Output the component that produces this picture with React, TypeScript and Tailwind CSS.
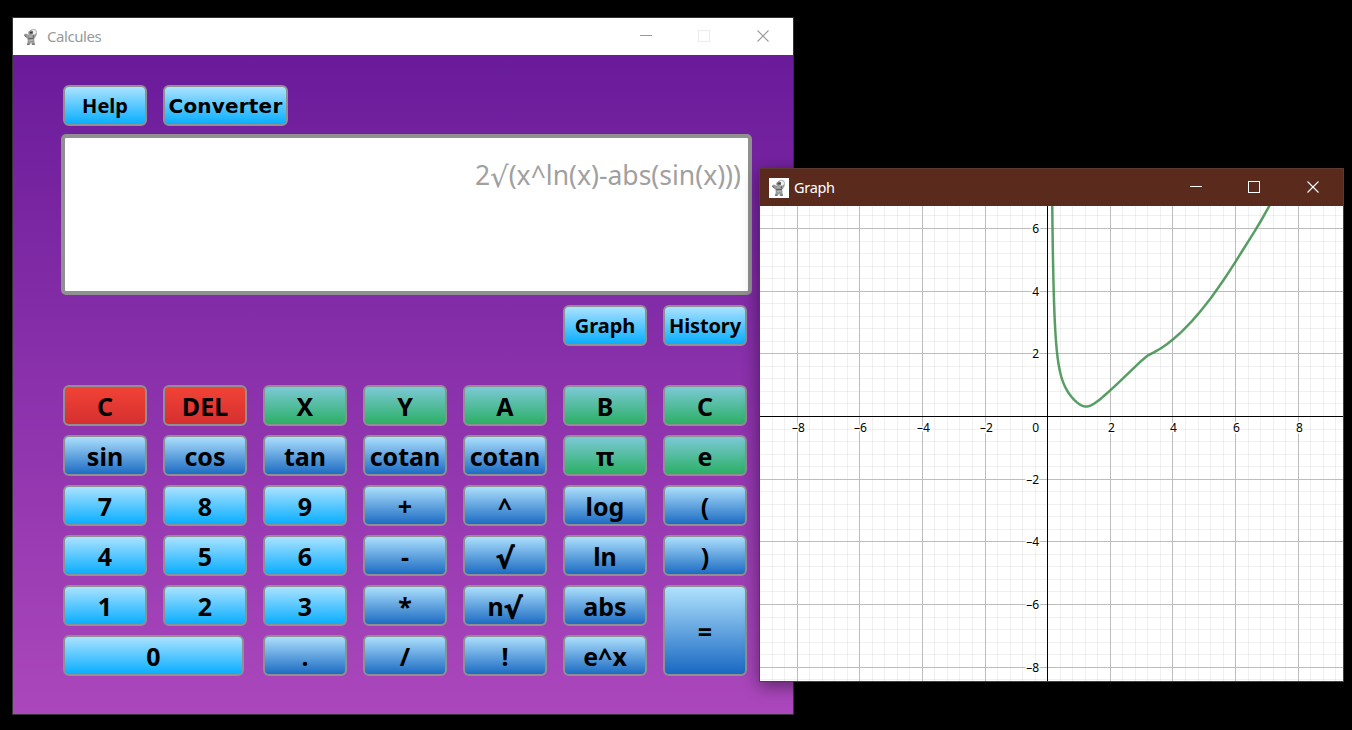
import type { ReactNode } from 'react';

type Tone = 'sky' | 'blue' | 'green' | 'red';

const TONES: Record<Tone, string> = {
  sky: 'from-[#b3e5ff] to-[#00abff]',
  blue: 'from-[#b3e5ff] to-[#1565c0]',
  green: 'from-[#80cbdc] to-[#27ae60]',
  red: 'from-[#f44336] to-[#d32f2f]',
};

const KEYS: { label: string; tone: Tone; span?: string }[] = [
  { label: 'C', tone: 'red' },
  { label: 'DEL', tone: 'red' },
  { label: 'X', tone: 'green' },
  { label: 'Y', tone: 'green' },
  { label: 'A', tone: 'green' },
  { label: 'B', tone: 'green' },
  { label: 'C', tone: 'green' },
  { label: 'sin', tone: 'blue' },
  { label: 'cos', tone: 'blue' },
  { label: 'tan', tone: 'blue' },
  { label: 'cotan', tone: 'blue' },
  { label: 'cotan', tone: 'blue' },
  { label: 'π', tone: 'green' },
  { label: 'e', tone: 'green' },
  { label: '7', tone: 'sky' },
  { label: '8', tone: 'sky' },
  { label: '9', tone: 'sky' },
  { label: '+', tone: 'blue' },
  { label: '^', tone: 'blue' },
  { label: 'log', tone: 'blue' },
  { label: '(', tone: 'blue' },
  { label: '4', tone: 'sky' },
  { label: '5', tone: 'sky' },
  { label: '6', tone: 'sky' },
  { label: '-', tone: 'blue' },
  { label: '√', tone: 'blue' },
  { label: 'ln', tone: 'blue' },
  { label: ')', tone: 'blue' },
  { label: '1', tone: 'sky' },
  { label: '2', tone: 'sky' },
  { label: '3', tone: 'sky' },
  { label: '*', tone: 'blue' },
  { label: 'n√', tone: 'blue' },
  { label: 'abs', tone: 'blue' },
  { label: '=', tone: 'blue', span: 'row-span-2' },
  { label: '0', tone: 'sky', span: 'col-span-2 mr-[3px]' },
  { label: '.', tone: 'blue' },
  { label: '/', tone: 'blue' },
  { label: '!', tone: 'blue' },
  { label: 'e^x', tone: 'blue' },
];

function Key({ tone, className, children }: { tone: Tone; className: string; children: ReactNode }) {
  return (
    <button
      className={`flex items-center justify-center rounded-[6px] border-2 border-[#909090] bg-linear-to-b/srgb bg-origin-border font-bold whitespace-nowrap text-black ${TONES[tone]} ${className}`}
    >
      {children}
    </button>
  );
}

/* The radical sign is set in its own face, larger than the surrounding letters. */
function Formula({ text, radical }: { text: string; radical: string }) {
  return (
    <span>
      {text.split('√').map((part, i) => (
        <span key={i}>
          {i > 0 && <span className={`font-['DejaVu_Sans',sans-serif] leading-none ${radical}`}>√</span>}
          {part}
        </span>
      ))}
    </span>
  );
}

function Astronaut() {
  return (
    <svg width="20" height="20" viewBox="0 0 20 20" className="shrink-0 bg-white">
      <circle cx="12.200" cy="5.700" r="3.300" fill="#f1f1f1" stroke="#c0c0c0" strokeWidth="1.200" />
      <path d="M3 7.600 5 6.600 7 7.600h6.500l1.400-1.200.6 1.200-1.300 3-1 1.200.2 2.600.8 3.400h-3.400l-.6-2.600-1.300 2.600H5.800l1-3.800-.4-2.600L4 9.800z" fill="#999999" />
      <path d="M7.400 4.800 9.800 3.300l2.400.9-.2 2.700-2.800.9-1.800-1z" fill="#858585" />
      <path d="M9 4.900l2.600-.2-.3 1.500-2 .3z" fill="#3a3a3a" />
      <path d="M3.300 8.200l2 1.600M6.800 11.800l6-.4M6.200 17.300h2.300M11.300 17.300h2.200M12.500 8.500v2" stroke="#5e5e5e" strokeWidth="1" />
      <path d="M8.300 9.200h2.600M8 13.400l3.800-.3" stroke="#c4c4c4" strokeWidth=".8" />
    </svg>
  );
}

function WindowControls({ color, boxColor }: { color: string; boxColor: string }) {
  return (
    <svg width="130" height="13" viewBox="0 0 130 13" fill="none" shapeRendering="crispEdges" className="shrink-0">
      <path d="M0 5.500h12" stroke={color} />
      <rect x="58.500" y=".5" width="11" height="11" stroke={boxColor} />
      <path d="M117.500.5l11 11M128.500.5l-11 11" stroke={color} shapeRendering="auto" strokeWidth="1.100" />
    </svg>
  );
}

const UNIT = 31.33;
const W = 583;
const H = 475;
const AX = 287;
const AY = 210;

const lineX = (v: number) => Math.round(AX + 0.17 + v * 31.325);
const lineY = (v: number) => Math.round(AY - v * UNIT);

function curve() {
  let d = '';
  for (let x = 0.12; x < 7.6; x += x < 1.8 ? 0.01 : 0.2) {
    const y = Math.sqrt(Math.pow(x, Math.log(x)) - Math.abs(Math.sin(x)));
    d += `${d ? 'L' : 'M'}${(AX + 0.8 + x * UNIT).toFixed(2)} ${(AY + 0.5 - y * UNIT).toFixed(2)}`;
  }
  return d;
}

function Plot() {
  const steps = Array.from({ length: 51 }, (_, i) => i - 25);
  const labels = [-8, -6, -4, -2, 2, 4, 6, 8];
  const text = (v: number) => (v < 0 ? `–${-v}` : `${v}`);
  return (
    <svg width={W} height={H} viewBox={`0 0 ${W} ${H}`} className="block bg-white">
      {steps.filter((k) => k % 5).map((k) => (
        <g key={k} fill="#000" fillOpacity=".06">
          <rect x={lineX(k * 0.4)} y="0" width="1" height={H} />
          <rect x="0" y={lineY(k * 0.4)} width={W} height="1" />
        </g>
      ))}
      {steps.filter((k) => k % 5 === 0).map((k) => (
        <g key={k} fill="#bdbdbd">
          <rect x={lineX(k * 0.4)} y="0" width="1" height={H} />
          <rect x="0" y={lineY(k * 0.4)} width={W} height="1" />
        </g>
      ))}
      <path d={`M${AX + 0.5} 0V${H}M0 ${AY + 0.5}H${W}`} stroke="#000" />
      <g fontSize="12" fontFamily="'Noto Sans', sans-serif" stroke="#fff" strokeWidth="3" strokeLinejoin="round" paintOrder="stroke">
        {labels.map((v) => (
          <text key={`x${v}`} x={lineX(v) + 1.5} y={AY + 16} textAnchor="middle">{text(v)}</text>
        ))}
        {labels.filter((v) => v !== 8).map((v) => (
          <text key={`y${v}`} x={AX - 8} y={lineY(v) + 5} textAnchor="end">{text(v)}</text>
        ))}
        <text x={AX - 8} y={AY + 16} textAnchor="end">0</text>
      </g>
      <path d={curve()} fill="none" stroke="#388c46" strokeOpacity=".84" strokeWidth="2.500" strokeLinejoin="round" />
    </svg>
  );
}

export default function App() {
  return (
    <main className="relative h-[730px] w-[1352px] overflow-hidden bg-black font-['Noto_Sans',sans-serif]">
      <section className="absolute top-[17px] left-[12px] flex h-[698px] w-[782px] flex-col border border-[#333333]">
        <header className="flex h-[37px] shrink-0 items-center bg-white pr-[23px] pl-[8px]">
          <Astronaut />
          <h1 className="ml-[6px] flex-1 text-[15px] tracking-[-0.45px] text-[#999999]">Calcules</h1>
          <WindowControls color="#999999" boxColor="#ebebeb" />
        </header>
        <div className="flex flex-1 flex-col bg-linear-to-b/srgb from-[#6a1b9a] to-[#ab47bc] pt-[30px] pl-[50px]">
          <div className="flex gap-4">
            <Key tone="sky" className="h-[41px] w-[84px] text-[20px]">Help</Key>
            <Key tone="sky" className="h-[41px] w-[125px] font-['DejaVu_Sans',sans-serif] text-[20px] tracking-[0.2px]">Converter</Key>
          </div>
          <div className="mt-[8px] -ml-[2px] h-[161px] w-[691px] rounded-[5px] border-4 border-[#909090] bg-white pt-[18px] pr-[7px] text-right text-[26.5px] leading-[39px] text-[#a0a0a0]">
            <Formula text="2√(x^ln(x)-abs(sin(x)))" radical="relative top-[2px] text-[1.1em]" />
          </div>
          <div className="mt-[10px] flex w-[684px] justify-end gap-4">
            <Key tone="sky" className="h-[41px] w-[84px] text-[20px]">Graph</Key>
            <Key tone="sky" className="h-[41px] w-[84px] text-[20px] tracking-[-0.15px]">History</Key>
          </div>
          <div className="mt-[39px] grid grid-cols-[repeat(7,84px)] grid-rows-[repeat(6,41px)] gap-x-4 gap-y-[9px]">
            {KEYS.map((k, i) => (
              <Key key={i} tone={k.tone} className={`pt-[2px] text-[25px] ${k.span ?? ''}`}>
                <Formula text={k.label} radical="relative top-[2px] text-[1.12em] [-webkit-text-stroke:0.9px_black]" />
              </Key>
            ))}
          </div>
        </div>
      </section>

      <section className="absolute top-[168px] left-[759px] flex h-[514px] w-[585px] flex-col border border-[#5b3a30] shadow-[0_4px_16px_rgba(0,0,0,0.45)]">
        <header className="flex h-[37px] shrink-0 items-center bg-[#5a2a1d] pr-[23px] pl-[9px]">
          <Astronaut />
          <h1 className="ml-[5px] flex-1 text-[14.500px] tracking-[-0.3px] text-white">Graph</h1>
          <WindowControls color="#ffffff" boxColor="#ffffff" />
        </header>
        <Plot />
      </section>
    </main>
  );
}
